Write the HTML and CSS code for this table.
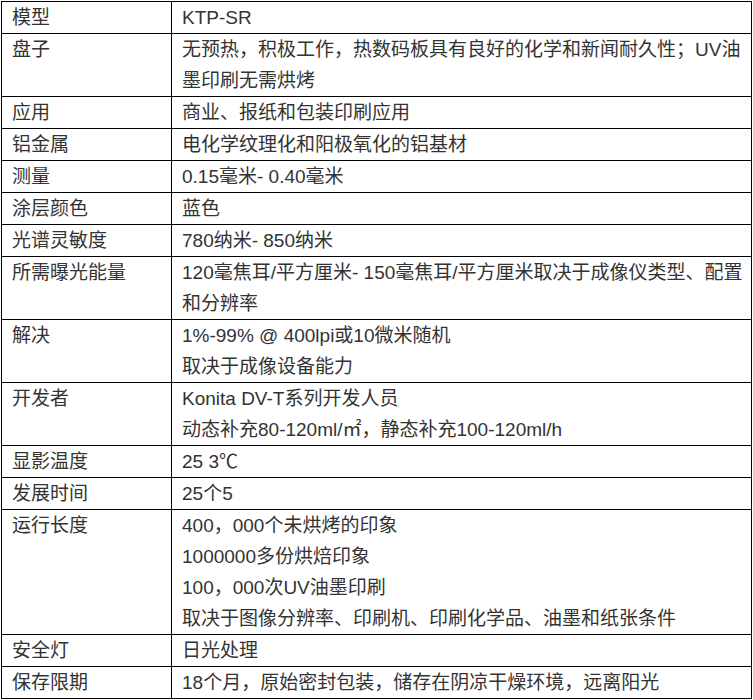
FILE: index.html
```html
<!DOCTYPE html>
<html lang="zh-CN">
<head>
<meta charset="utf-8">
<title>KTP-SR</title>
<link rel="stylesheet" href="styles.css">
</head>
<body>
<table class="spec">
  <colgroup><col class="c-label"><col class="c-value"></colgroup>
  <tbody>
    <tr><td>模型</td><td>KTP-SR</td></tr>
    <tr><td>盘子</td><td>无预热，积极工作，热数码板具有良好的化学和新闻耐久性；UV油墨印刷无需烘烤</td></tr>
    <tr><td>应用</td><td>商业、报纸和包装印刷应用</td></tr>
    <tr><td>铝金属</td><td>电化学纹理化和阳极氧化的铝基材</td></tr>
    <tr><td>测量</td><td>0.15毫米- 0.40毫米</td></tr>
    <tr><td>涂层颜色</td><td>蓝色</td></tr>
    <tr><td>光谱灵敏度</td><td>780纳米- 850纳米</td></tr>
    <tr><td>所需曝光能量</td><td>120毫焦耳/平方厘米- 150毫焦耳/平方厘米取决于成像仪类型、配置和分辨率</td></tr>
    <tr><td>解决</td><td><div>1%-99% @ 400lpi或10微米随机</div><div>取决于成像设备能力</div></td></tr>
    <tr><td>开发者</td><td><div>Konita DV-T系列开发人员</div><div>动态补充80-120ml/㎡，静态补充100-120ml/h</div></td></tr>
    <tr><td>显影温度</td><td>25 3℃</td></tr>
    <tr><td>发展时间</td><td>25个5</td></tr>
    <tr><td>运行长度</td><td><div>400，000个未烘烤的印象</div><div>1000000多份烘焙印象</div><div>100，000次UV油墨印刷</div><div>取决于图像分辨率、印刷机、印刷化学品、油墨和纸张条件</div></td></tr>
    <tr><td>安全灯</td><td>日光处理</td></tr>
    <tr><td>保存限期</td><td>18个月，原始密封包装，储存在阴凉干燥环境，远离阳光</td></tr>
  </tbody>
</table>
</body>
</html>
```

FILE: styles.css
```css
html, body {
  margin: 0;
  padding: 0;
  background: #ffffff;
}
body {
  padding: 1px;
  font-family: "Liberation Sans", "Noto Sans CJK SC", sans-serif;
  font-size: 19px;
  color: #333333;
}
.spec {
  border-collapse: collapse;
  table-layout: fixed;
  width: 750px;
}
.c-label { width: 170px; }
.c-value { width: 580px; }
.spec td {
  border: 1px solid #000000;
  padding: 0 0 0 10px;
  line-height: 31px;
  vertical-align: top;
  text-align: left;
}
```
